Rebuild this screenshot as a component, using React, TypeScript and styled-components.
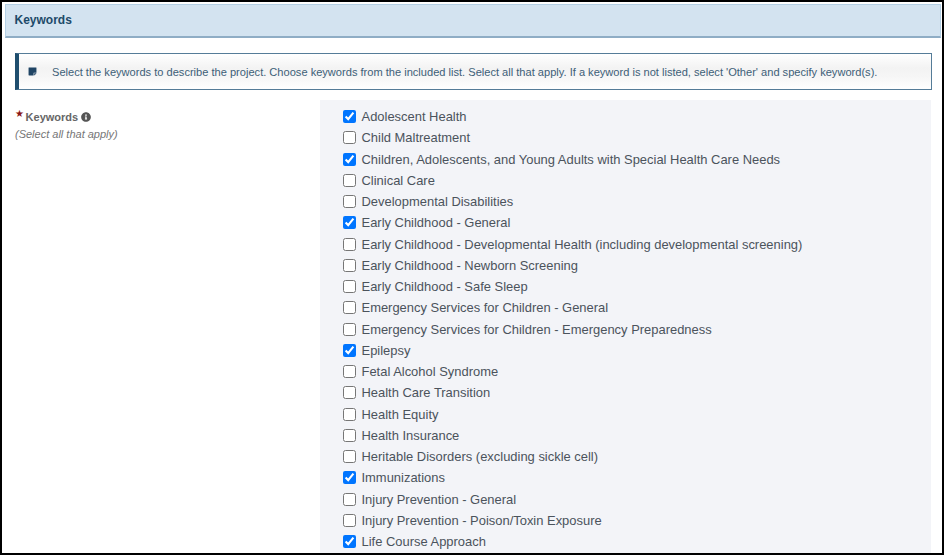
import React from "react";
import styled, { createGlobalStyle } from "styled-components";
import { FaInfoCircle, FaStickyNote } from "react-icons/fa";

const Global = createGlobalStyle`
  html, body { margin: 0; padding: 0; background: #fff; }
  body { font-family: "Liberation Sans", Arial, sans-serif; }
`;

const Frame = styled.div`
  box-sizing: border-box;
  width: 944px;
  height: 555px;
  overflow: hidden;
  background: #fff;
  border: 2px solid #000;
  padding: 2px 1px 0 3px;
  display: flex;
  flex-direction: column;
`;

const Header = styled.header`
  box-sizing: border-box;
  height: 34px;
  flex: none;
  display: flex;
  align-items: center;
  padding: 0 0 1px 8.5px;
  background: #d3e3f0;
  border: 1px solid #b4d0e5;
  border-bottom: 2px solid #8fadc5;
  color: #1d4a69;
  font-size: 12px;
  font-weight: 700;
`;

const Body = styled.div`
  flex: 1;
  min-height: 0;
  display: flex;
  flex-direction: column;
  padding: 15px 9px 0 10px;
`;

const Note = styled.div`
  box-sizing: border-box;
  height: 37px;
  flex: none;
  display: flex;
  align-items: center;
  gap: 15px;
  padding-left: 9px;
  border: 1px solid #557c98;
  border-left: 4px solid #1f4e6e;
  background: linear-gradient(#fff 0, #f3f3f3 40%, #f6f6f6 65%, #fff 100%);
  color: #3d6078;
  font-size: 11.09px;
`;

const NoteIcon = styled(FaStickyNote)`
  width: 9px;
  height: 9px;
  color: #1f4464;
  flex: none;
`;

const Row = styled.div`
  flex: 1;
  min-height: 0;
  display: flex;
  margin-top: 10px;
`;

const LabelCol = styled.div`
  width: 305px;
  flex: none;
  padding-top: 10px;
`;

const LabelLine = styled.div`
  display: flex;
  align-items: center;
  gap: 3px;
  color: #666;
  font-size: 11px;
  font-weight: 700;
  line-height: 14px;
`;

const Star = styled.span`
  color: #8a1616;
  font-family: "DejaVu Sans", sans-serif;
  font-size: 10px;
  line-height: 8px;
  align-self: flex-start;
  margin-right: -1.4px;
`;

const Info = styled(FaInfoCircle)`
  width: 10px;
  height: 10px;
  color: #555;
`;

const Hint = styled.div`
  color: #767676;
  font-size: 11px;
  font-style: italic;
  line-height: 14px;
  margin-top: 3px;
`;

const Panel = styled.div`
  flex: 1;
  min-width: 0;
  margin-right: 1px;
  background: #f3f4f8;
  padding: 6px 0 0 23px;
  display: grid;
  grid-auto-rows: 21.25px;
  align-content: start;
  overflow: hidden;
`;

const Option = styled.label`
  display: flex;
  align-items: center;
  gap: 5.5px;
  color: #4b535c;
  font-size: 12.95px;
  white-space: nowrap;
`;

const Box = styled.input`
  width: 13px;
  height: 13px;
  margin: 0;
  flex: none;
`;

const options: [string, boolean][] = [
  ["Adolescent Health", true],
  ["Child Maltreatment", false],
  ["Children, Adolescents, and Young Adults with Special Health Care Needs", true],
  ["Clinical Care", false],
  ["Developmental Disabilities", false],
  ["Early Childhood - General", true],
  ["Early Childhood - Developmental Health (including developmental screening)", false],
  ["Early Childhood - Newborn Screening", false],
  ["Early Childhood - Safe Sleep", false],
  ["Emergency Services for Children - General", false],
  ["Emergency Services for Children - Emergency Preparedness", false],
  ["Epilepsy", true],
  ["Fetal Alcohol Syndrome", false],
  ["Health Care Transition", false],
  ["Health Equity", false],
  ["Health Insurance", false],
  ["Heritable Disorders (excluding sickle cell)", false],
  ["Immunizations", true],
  ["Injury Prevention - General", false],
  ["Injury Prevention - Poison/Toxin Exposure", false],
  ["Life Course Approach", true],
];

export default function App() {
  return (
    <Frame>
      <Global />
      <Header>Keywords</Header>
      <Body>
        <Note>
          <NoteIcon />
          <span>
            Select the keywords to describe the project. Choose keywords from the included list. Select all that apply. If a keyword is not listed, select 'Other' and specify keyword(s).
          </span>
        </Note>
        <Row>
          <LabelCol>
            <LabelLine>
              <Star>★</Star>
              <span>Keywords</span>
              <Info />
            </LabelLine>
            <Hint>(Select all that apply)</Hint>
          </LabelCol>
          <Panel>
            {options.map(([label, checked]) => (
              <Option key={label}>
                <Box type="checkbox" defaultChecked={checked} />
                {label}
              </Option>
            ))}
          </Panel>
        </Row>
      </Body>
    </Frame>
  );
}
